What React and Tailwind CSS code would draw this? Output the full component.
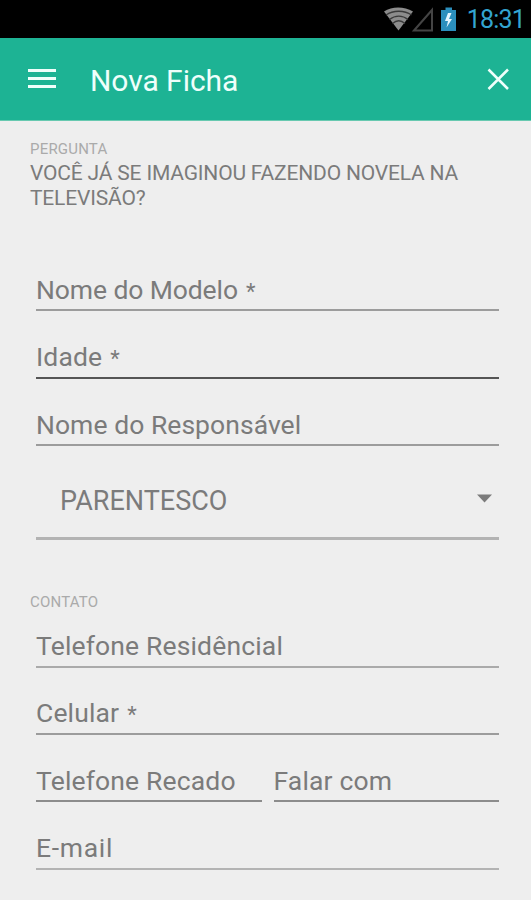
import React from "react";

const StatusBar = () => (
  <div className="flex h-[38px] items-center justify-end bg-black pr-[6px] text-[#33a5d1]">
    <svg className="h-[26px] w-[75px]" viewBox="0 0 75 26" fill="none">
      <path d="M1 5.500C9 0 21 0 30 5.500L15.500 24.500Z" fill="#8c8c8c" />
      <path d="M3 9C10 4 21.500 4 28.500 9M6.500 13.500C12 9 19.500 9 25 13.500M9.500 17.500C13.500 14 18 14 22 17.500" stroke="#3a3a3a" strokeWidth="1.300" />
      <path d="M31 24.500L49 4V24.500Z" stroke="#444" strokeWidth="2" />
      <path d="M58 4H62.500V1.500H69V4H73V25H58Z" fill="#2b8fbd" />
      <path d="M65 7L62 15H65L63.500 21.500L69 13H66L68.500 7Z" fill="#e4f6ff" />
    </svg>
    <span className="ml-[9px] pt-px text-[25px] leading-[37px] tracking-[-0.8px]">18:31</span>
  </div>
);

const Header = () => (
  <header className="flex h-[83px] items-center border-b border-[#67c9b0] bg-[#1db394] pl-7 pr-[21px] text-[#effffb]">
    <button className="flex flex-col gap-[5px] pb-[2px]" aria-label="Menu">
      <span className="h-[3px] w-7 bg-current" />
      <span className="h-[3px] w-7 bg-current" />
      <span className="h-[3px] w-7 bg-current" />
    </button>
    <h1 className="ml-[34px] flex-1 pt-[3px] text-[30px] leading-[34px] tracking-[-0.05px]">Nova Ficha</h1>
    <button aria-label="Fechar">
      <svg className="h-6 w-6" viewBox="0 0 24 24" fill="none" stroke="currentColor" strokeWidth="2.500">
        <path d="M2.500 2.500L22 22M22 2.500L2.500 22" />
      </svg>
    </button>
  </header>
);

const Field = ({ label, required, line = "border-[#9c9c9c]", tracking = "tracking-[0.15px]", pad = "pb-[3px]" }) => (
  <div className={`flex h-[67.4px] flex-1 items-end border-b-2 text-[26.5px] leading-[34px] ${pad} ${tracking} ${line}`}>
    <span>{label}</span>
    {required && <span className="ml-2 text-[22px] leading-[30px]">*</span>}
  </div>
);

const App = () => {
  return (
    <div className="h-[900px] w-[531px] overflow-hidden bg-[#eee] font-['Roboto',sans-serif] text-[#7b7b7b]">
      <StatusBar />
      <Header />
      <main className="pl-[30px] pr-8">
        <section className="h-[123px] pt-[19px]">
          <h2 className="text-[15px] leading-[18px] tracking-[0.2px] text-[#aaa]">PERGUNTA</h2>
          <p className="pt-[3px] text-[21px] leading-[25px] tracking-[-0.18px]">
            VOCÊ JÁ SE IMAGINOU FAZENDO NOVELA NA
            <br />
            TELEVISÃO?
          </p>
        </section>
        <section className="pl-[6px]">
          <Field label="Nome do Modelo" required tracking="tracking-[-0.1px]" pad="pb-[2px]" />
          <Field label="Idade" required line="border-[#555]" />
          <Field label="Nome do Responsável" tracking="tracking-[0.05px]" pad="pb-[2px]" />
          <div className="flex h-[94px] items-center border-b-[3px] border-[#b3b3b3] pl-6 pr-[7px] pt-[18px] text-[27px]">
            <span className="flex-1 pt-[2px]">PARENTESCO</span>
            <svg className="mb-[4px] h-[9px] w-[15px]" viewBox="0 0 15 9" fill="currentColor">
              <path d="M0 0.500H15L7.500 8.500Z" />
            </svg>
          </div>
        </section>
        <h2 className="mt-[53px] text-[15px] leading-[18px] tracking-[0.2px] text-[#aaa]">CONTATO</h2>
        <section className="-mt-[11px] pl-[6px]">
          <Field label="Telefone Residêncial" line="border-[#aaa]" />
          <Field label="Celular" required />
          <div className="flex gap-3">
            <Field label="Telefone Recado" line="border-[#8c8c8c]" pad="pb-[2px]" />
            <Field label="Falar com" line="border-[#8c8c8c]" pad="pb-[2px]" />
          </div>
          <Field label="E-mail" line="border-[#b3b3b3]" tracking="tracking-[0.7px]" />
        </section>
      </main>
    </div>
  );
};

export default App;
